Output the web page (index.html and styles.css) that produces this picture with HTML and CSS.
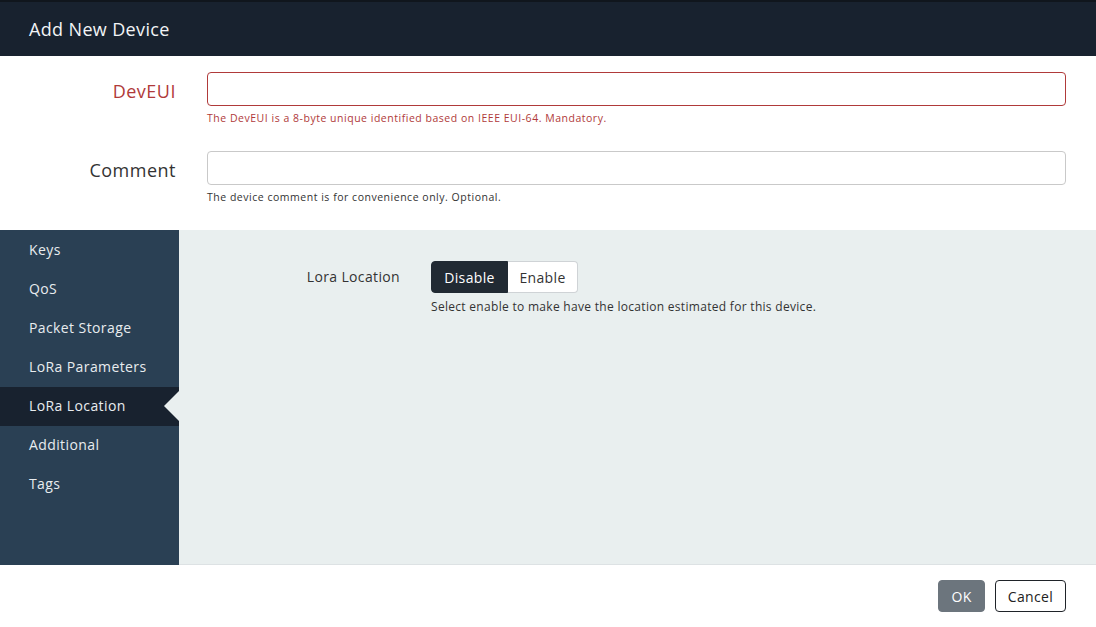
FILE: index.html
```html
<!DOCTYPE html>
<html>
<head>
<meta charset="utf-8">
<title>Add New Device</title>
<link rel="stylesheet" href="styles.css">
</head>
<body>
<div class="modal">
  <div class="header">Add New Device</div>
  <div class="form">
    <div class="row">
      <label class="label error">DevEUI</label>
      <div class="field">
        <input class="input invalid" type="text">
        <div class="help error">The DevEUI is a 8-byte unique identified based on IEEE EUI-64. Mandatory.</div>
      </div>
    </div>
    <div class="row">
      <label class="label">Comment</label>
      <div class="field">
        <input class="input" type="text">
        <div class="help">The device comment is for convenience only. Optional.</div>
      </div>
    </div>
  </div>
  <div class="lower">
    <ul class="nav">
      <li class="nav-item">Keys</li>
      <li class="nav-item">QoS</li>
      <li class="nav-item">Packet Storage</li>
      <li class="nav-item">LoRa Parameters</li>
      <li class="nav-item active">LoRa Location</li>
      <li class="nav-item">Additional</li>
      <li class="nav-item">Tags</li>
    </ul>
    <div class="content">
      <div class="crow">
        <div class="clabel">Lora Location</div>
        <div class="cfield">
          <div class="btn-group">
            <button class="seg selected">Disable</button>
            <button class="seg">Enable</button>
          </div>
          <div class="chelp">Select enable to make have the location estimated for this device.</div>
        </div>
      </div>
    </div>
  </div>
  <div class="footer">
    <button class="btn ok">OK</button>
    <button class="btn cancel">Cancel</button>
  </div>
</div>
</body>
</html>
```
FILE: styles.css
```css
* { box-sizing: border-box; }
html, body { margin: 0; padding: 0; }
body {
  font-family: "Open Sans", "Noto Sans", "Liberation Sans", sans-serif;
  background: #ffffff;
  color: #333;
  width: 1096px;
  height: 627px;
  overflow: hidden;
  letter-spacing: 0.35px;
}
.modal { display: flex; flex-direction: column; height: 627px; }
.header {
  height: 56px;
  background: #18222f;
  color: #f2f4f6;
  font-size: 18px;
  padding-left: 29px;
  display: flex;
  align-items: center;
  border-top: 2px solid #10161d;
}
.form {
  padding: 16px 30px 26px 0;
  display: flex;
  flex-direction: column;
  gap: 26px;
}
.row { display: flex; }
.label {
  width: 207px;
  padding-right: 31px;
  text-align: right;
  font-size: 18px;
  line-height: 38px;
  color: #333;
  letter-spacing: 0.5px;
}
.label.error { color: #b03a3a; }
.field { flex: 1; display: flex; flex-direction: column; }
.input {
  height: 34px;
  border: 1px solid #c9c9c9;
  border-radius: 4px;
  font-family: inherit;
  font-size: 14px;
  padding: 0 10px;
  outline: none;
}
.input.invalid { border-color: #b03a3a; }
.help {
  font-size: 10.5px;
  line-height: 13px;
  margin-top: 6px;
  color: #333;
  letter-spacing: 0.52px;
}
.help.error { color: #b03a3a; }
.lower { flex: 1; display: flex; }
.nav {
  list-style: none;
  margin: 0;
  padding: 1px 0 0 0;
  width: 179px;
  background: #2a4054;
}
.nav-item {
  height: 39px;
  line-height: 38px;
  padding-left: 29px;
  font-size: 14px;
  color: #e8ecef;
  position: relative;
  letter-spacing: 0.4px;
}
.nav-item.active { background: #18222f; }
.nav-item.active::after {
  content: "";
  position: absolute;
  right: 0;
  top: 4px;
  border-style: solid;
  border-width: 15px 15px 15px 0;
  border-color: transparent #e9efef transparent transparent;
}
.content {
  flex: 1;
  background: #e9efef;
  padding-top: 31px;
  border-bottom: 1px solid #dde2e4;
}
.crow { display: flex; }
.clabel {
  width: 252px;
  padding-right: 31px;
  text-align: right;
  font-size: 14px;
  line-height: 32px;
  color: #333;
}
.cfield { display: flex; flex-direction: column; }
.btn-group { display: flex; }
.seg {
  height: 32px;
  font-family: inherit;
  font-size: 14px;
  letter-spacing: 0.35px;
  border: 1px solid #cfd3d6;
  background: #fff;
  color: #333;
  padding: 0;
  width: 70px;
  border-radius: 0 4px 4px 0;
  border-left: none;
}
.seg.selected {
  width: 77px;
  background: #212a33;
  color: #fff;
  border: 1px solid #212a33;
  border-radius: 4px 0 0 4px;
}
.chelp {
  font-size: 12px;
  line-height: 16px;
  margin-top: 6px;
  color: #333;
  letter-spacing: 0.3px;
}
.footer {
  height: 62px;
  display: flex;
  justify-content: flex-end;
  align-items: center;
  gap: 10px;
  padding-right: 30px;
}
.btn {
  height: 32px;
  font-family: inherit;
  font-size: 14px;
  letter-spacing: 0.35px;
  border-radius: 4px;
  padding: 0;
}
.ok {
  width: 47px;
  background: #6c757d;
  border: 1px solid #6c757d;
  color: #fff;
}
.cancel {
  width: 71px;
  background: #fff;
  border: 1px solid #1f2329;
  color: #222;
}
```
